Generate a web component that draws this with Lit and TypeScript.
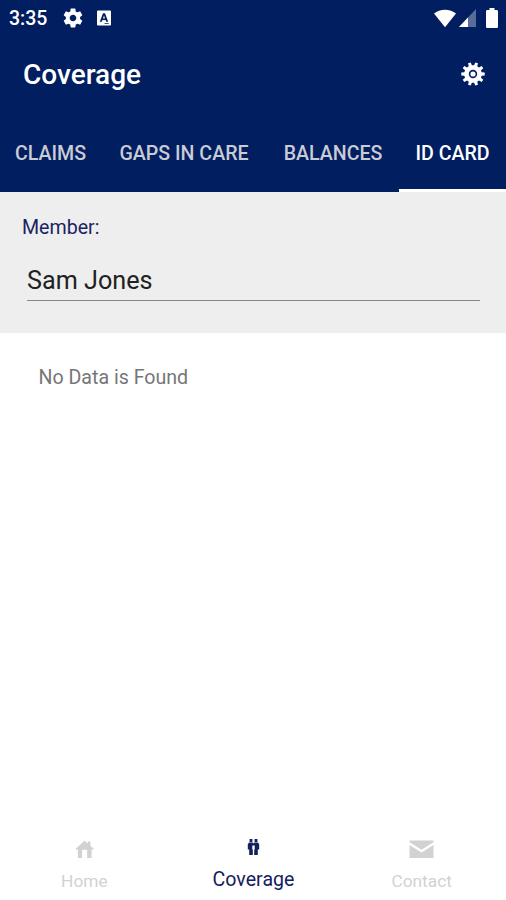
import { LitElement, html, css, svg } from "lit";
import { customElement, state } from "lit/decorators.js";
import { classMap } from "lit/directives/class-map.js";

/** Outline of a cog with flat-topped teeth, centred on (cx, cy). */
function cog(cx: number, cy: number, teeth: number, outer: number, root: number): string {
  const step = (Math.PI * 2) / teeth;
  const points: string[] = [];
  for (let i = 0; i < teeth; i++) {
    const a = i * step - Math.PI / 2 + step / 2;
    for (const [r, f] of [[root, -0.3], [outer, -0.19], [outer, 0.19], [root, 0.3]]) {
      points.push(`${(cx + r * Math.cos(a + f * step)).toFixed(2)} ${(cy + r * Math.sin(a + f * step)).toFixed(2)}`);
    }
  }
  return `M${points.join("L")}Z`;
}

@customElement("status-bar")
class StatusBar extends LitElement {
  static styles = css`
    :host { display: flex; align-items: center; height: 36px; padding: 0 8px 0 9px; color: #fff; }
    .time { width: 54px; font-size: 19.5px; font-weight: 500; line-height: 36px; padding-top: 1px; }
    .settings { width: 20px; height: 20px; }
    .app { width: 14px; height: 16px; margin-left: 14px; }
    .spacer { flex: 1; }
    .wifi { width: 22px; height: 19px; }
    .signal { width: 17px; height: 18px; margin-left: 3px; }
    .battery { width: 12px; height: 20px; margin-left: 10px; }
    svg { display: block; fill: currentColor; }
  `;
  render() {
    return html`
      <span class="time">3:35</span>
      <svg class="settings" viewBox="1.5 2 21 20">
        <path d="M19.43 12.98c.04-.32.07-.64.07-.98s-.03-.66-.07-.98l2.11-1.65c.19-.15.24-.42.12-.64l-2-3.46c-.12-.22-.39-.3-.61-.22l-2.49 1c-.52-.4-1.08-.73-1.69-.98l-.38-2.65C14.46 2.18 14.25 2 14 2h-4c-.25 0-.46.18-.49.42l-.38 2.65c-.61.25-1.17.59-1.69.98l-2.49-1c-.23-.09-.49 0-.61.22l-2 3.46c-.13.22-.07.49.12.64l2.11 1.65c-.04.32-.07.65-.07.98s.03.66.07.98l-2.11 1.65c-.19.15-.24.42-.12.64l2 3.46c.12.22.39.3.61.22l2.49-1c.52.4 1.08.73 1.69.98l.38 2.65c.03.24.24.42.49.42h4c.25 0 .46-.18.49-.42l.38-2.65c.61-.25 1.17-.59 1.69-.98l2.49 1c.23.09.49 0 .61-.22l2-3.46c.12-.22.07-.49-.12-.64l-2.11-1.65zM12 15.5c-1.93 0-3.5-1.57-3.5-3.5s1.57-3.5 3.5-3.5 3.5 1.57 3.5 3.5-1.57 3.5-3.5 3.5z"/>
      </svg>
      <svg class="app" viewBox="0 0 14 16">
        <path fill-rule="evenodd" d="M1 .5h12a1 1 0 0 1 1 1v13a1 1 0 0 1-1 1H1a1 1 0 0 1-1-1v-13a1 1 0 0 1 1-1ZM6 3.2 2.8 11.8h2l.6-1.7h3.2l.6 1.7h2L8 3.2ZM7 5.6l1 2.9H6ZM7.5 13v.8h4.2V13Z"/>
      </svg>
      <span class="spacer"></span>
      <svg class="wifi" viewBox="0 0 22 19">
        <path d="M0 4.6C3 2.2 6.8.8 11 .8s8 1.4 11 3.8L11 18.2Z"/>
      </svg>
      <svg class="signal" viewBox="0 0 17 18">
        <path opacity=".35" d="M17 0v18H0Z"/>
        <path d="M9 8.5V18H0Z"/>
      </svg>
      <svg class="battery" viewBox="0 0 12 20">
        <path d="M3.5 0h5v2h2.2A1.3 1.3 0 0 1 12 3.3v15.4a1.3 1.3 0 0 1-1.3 1.3H1.3A1.3 1.3 0 0 1 0 18.7V3.3A1.3 1.3 0 0 1 1.3 2h2.2Z"/>
      </svg>
    `;
  }
}

@customElement("tab-strip")
class TabStrip extends LitElement {
  static styles = css`
    :host { display: flex; height: 75px; }
    .tab {
      box-sizing: border-box; flex: none; width: 107px; height: 75.5px; padding-top: 6px;
      border-bottom: 3.5px solid transparent; text-align: center; white-space: nowrap;
      font-size: 19.6px; font-weight: 500; line-height: 64px; color: #c9cbd5; cursor: pointer;
    }
    .claims { width: 101px; }
    .gaps { width: 166px; }
    .balances { width: 132px; }
    .active { color: #fff; border-color: #fff; }
  `;
  @state() private active = "card";
  private tabs = [
    { id: "claims", label: "CLAIMS" },
    { id: "gaps", label: "GAPS IN CARE" },
    { id: "balances", label: "BALANCES" },
    { id: "card", label: "ID CARD" },
  ];
  render() {
    return this.tabs.map((t) => html`
      <div class=${classMap({ tab: true, [t.id]: true, active: t.id === this.active })}
        @click=${() => (this.active = t.id)}>${t.label}</div>`);
  }
}

const navIcons = {
  home: svg`<path d="M3.6 9.8 12.6 1.8l3.2 2.8V2.4h2.6v4.4l3.4 3-1 1.1-1.2-.9V19h-4.5v-8.2h-5V19H5.8V10l-1.2.9Z"/>`,
  people: svg`<path d="M8.6 1h2.8v3H8.6ZM13.6 1h2.8v3h-2.8ZM8 4.6h3.6l.9.9.9-.9H17l1.2 1.6v5.2h-1.4V17h-3.6v-5.4h.5V7.4h-2.4v4.2h.5V17H8.2v-5.6H6.8V6.2Z"/>`,
  mail: svg`<path d="M.5 1.5h24v1.8l-12 7.4-12-7.4ZM.5 6l12 7.4 12-7.4v13H.5Z"/>`,
};

@customElement("bottom-nav")
class BottomNav extends LitElement {
  static styles = css`
    :host { display: flex; height: 82px; background: #fff; }
    .item { flex: 1; display: flex; flex-direction: column; align-items: center; padding-top: 21px; color: #d2d2d2; }
    .icon { display: block; width: 25px; height: 20px; fill: currentColor; }
    .label { margin-top: 11px; font-size: 17.3px; line-height: 22px; }
    .active { padding-top: 20px; color: #14205e; }
    .active .label { font-size: 19.6px; margin-top: 11px; padding-left: 1px; }
  `;
  private items = [
    { label: "Home", icon: navIcons.home, active: false },
    { label: "Coverage", icon: navIcons.people, active: true },
    { label: "Contact", icon: navIcons.mail, active: false },
  ];
  render() {
    return this.items.map((i) => html`
      <div class=${classMap({ item: true, active: i.active })}>
        <svg class="icon" viewBox="0 0 25 20">${i.icon}</svg>
        <span class="label">${i.label}</span>
      </div>`);
  }
}

@customElement("app-root")
class AppRoot extends LitElement {
  static styles = css`
    :host {
      display: flex; flex-direction: column; width: 100%; height: 100vh; overflow: hidden;
      background: #fff; font-family: Roboto, "Liberation Sans", sans-serif;
    }
    .header { flex: none; height: 191.5px; background: #001e60; color: #fff; }
    .toolbar { display: flex; align-items: center; justify-content: space-between; height: 80px; padding: 0 21px 0 23px; }
    .title { font-size: 28px; font-weight: 500; line-height: 78px; margin-top: -2px; }
    .gear { width: 24px; height: 24px; margin-top: -4px; fill: #fff; }
    .member { box-sizing: border-box; flex: none; height: 141px; padding: 24px 26px 0 22px; background: #eee; }
    .caption { font-size: 19.6px; line-height: 24px; color: #1c2262; }
    .value {
      box-sizing: border-box; height: 43px; margin: 18px 0 0 5px; border-bottom: 1.5px solid #868686;
      font-size: 25.2px; line-height: 46px; color: #212121;
    }
    .content { flex: 1; padding: 33px 38.5px; font-size: 19.6px; line-height: 24px; color: #767676; }
  `;
  render() {
    return html`
      <div class="header">
        <status-bar></status-bar>
        <div class="toolbar">
          <span class="title">Coverage</span>
          <svg class="gear" viewBox="0 0 24 24">
            <path fill-rule="evenodd" d="${cog(12, 12, 10, 11.8, 8.8)}M12 7.8a4.2 4.2 0 1 0 0 8.4 4.2 4.2 0 0 0 0-8.4ZM12 9.4a2.6 2.6 0 1 1 0 5.2 2.6 2.6 0 0 1 0-5.2Z"/>
          </svg>
        </div>
        <tab-strip></tab-strip>
      </div>
      <div class="member">
        <div class="caption">Member:</div>
        <div class="value">Sam Jones</div>
      </div>
      <div class="content">No Data is Found</div>
      <bottom-nav></bottom-nav>
    `;
  }
}
